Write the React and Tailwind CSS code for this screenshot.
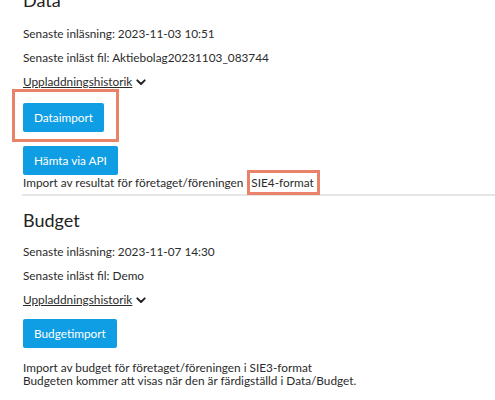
import React from "react";

function Chevron() {
  return (
    <svg width="10" height="7" viewBox="0 0 10 7" className="ml-[4px] inline-block" fill="none">
      <path d="M1.3 1.3 L5 5 L8.7 1.3" stroke="#1f1f1f" strokeWidth="1.9" strokeLinecap="round" strokeLinejoin="round" />
    </svg>
  );
}

function Btn({ children }) {
  return (
    <button className="h-[29px] rounded-[2px] bg-[#0f9de3] px-[11px] text-[11.8px] text-white">
      {children}
    </button>
  );
}

export default function App() {
  return (
    <div className="relative h-[400px] w-[495px] overflow-hidden bg-white font-['Lato','Noto_Sans',sans-serif] text-[#2b2b2b]">
      <div className="pl-[23px]">
        <h2 className="-mt-[12px] text-[18px] leading-[24px] text-[#222]">Data</h2>
        <p className="mt-[14px] text-[11.8px] leading-[16px]">Senaste inläsning: 2023-11-03 10:51</p>
        <p className="mt-[8px] text-[11.8px] leading-[16px]">Senaste inläst fil: Aktiebolag20231103_083744</p>
        <p className="mt-[8px] flex items-center text-[11.8px] leading-[16px]">
          <span className="underline">Uppladdningshistorik</span>
          <Chevron />
        </p>
        <div className="relative mt-[13px] w-fit">
          <Btn>Dataimport</Btn>
          <div className="pointer-events-none absolute -left-[11px] -right-[15px] -top-[14px] -bottom-[10px] border-[3px] border-[#e8836a]" />
        </div>
        <div className="mt-[14px]">
          <Btn>Hämta via API</Btn>
        </div>
        <p className="mt-[1px] text-[11.8px] leading-[14px]">
          Import av resultat för företaget/föreningen{" "}
          <span className="relative">
            i
            <span className="pointer-events-none absolute -top-[5px] -bottom-[5px] left-[1px] w-[73px] border-[3px] border-[#e8836a] bg-white" />
            <span className="relative pl-[2px]">SIE4-format</span>
          </span>
        </p>
      </div>
      <div className="ml-[22px] mt-[4px] h-[2px] bg-[#e6e6e6]" />
      <div className="pl-[23px]">
        <h2 className="mt-[12px] text-[18px] leading-[24px] text-[#222]">Budget</h2>
        <p className="mt-[12px] text-[11.8px] leading-[16px]">Senaste inläsning: 2023-11-07 14:30</p>
        <p className="mt-[8px] text-[11.8px] leading-[16px]">Senaste inläst fil: Demo</p>
        <p className="mt-[8px] flex items-center text-[11.8px] leading-[16px]">
          <span className="underline">Uppladdningshistorik</span>
          <Chevron />
        </p>
        <div className="mt-[11px]">
          <Btn>Budgetimport</Btn>
        </div>
        <p className="mt-[13px] text-[11.8px] leading-[13px]">
          Import av budget för företaget/föreningen i SIE3-format
          <br />
          Budgeten kommer att visas när den är färdigställd i Data/Budget.
        </p>
      </div>
    </div>
  );
}
